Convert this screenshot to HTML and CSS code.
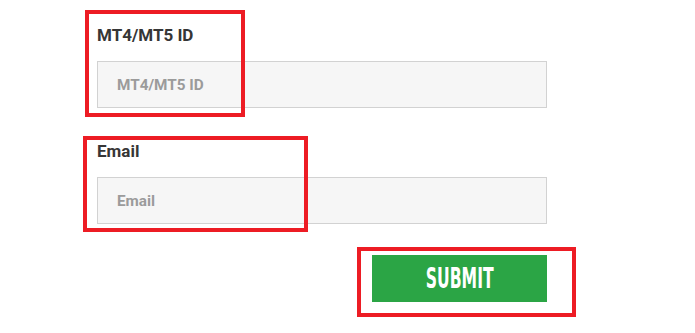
FILE: index.html
```html
<!DOCTYPE html>
<html>
<head>
<meta charset="utf-8">
<link rel="stylesheet" href="styles.css">
</head>
<body>
<div class="page">
  <form class="form">
    <label class="label">MT4/MT5 ID</label>
    <input class="field" type="text" placeholder="MT4/MT5 ID">
    <label class="label label-second">Email</label>
    <input class="field" type="text" placeholder="Email">
    <div class="actions">
      <button class="submit" type="button"><span class="submit-text">SUBMIT</span></button>
    </div>
  </form>
  <div class="mark mark-id"></div>
  <div class="mark mark-email"></div>
  <div class="mark mark-submit"></div>
</div>
</body>
</html>
```
FILE: styles.css
```css
html, body {
  margin: 0;
  padding: 0;
  background: #ffffff;
}
.page {
  position: relative;
  width: 695px;
  height: 333px;
  overflow: hidden;
  font-family: Roboto, "Liberation Sans", sans-serif;
}
.form {
  display: flex;
  flex-direction: column;
  width: 450px;
  padding: 25px 0 0 97px;
  margin: 0;
}
.label {
  display: block;
  font-size: 17px;
  line-height: 20px;
  font-weight: 700;
  color: #363636;
  margin-bottom: 16px;
}
.label-second {
  margin-top: 33px;
}
.field {
  box-sizing: border-box;
  width: 450px;
  height: 47px;
  margin: 0;
  padding: 0 0 0 19px;
  border: 1px solid #d2d2d2;
  background: #f6f6f6;
  font-family: Roboto, "Liberation Sans", sans-serif;
  font-size: 15.3px;
  font-weight: 700;
  color: #555;
  outline: none;
}
.field::placeholder {
  color: #9b9b9b;
  opacity: 1;
}
.actions {
  display: flex;
  justify-content: flex-end;
  margin-top: 31px;
}
.submit {
  width: 175px;
  height: 47px;
  border: none;
  margin: 0;
  padding: 0;
  background: #2ba545;
  display: flex;
  align-items: center;
  justify-content: center;
  cursor: pointer;
}
.submit-text {
  display: inline-block;
  font-family: "DejaVu Sans Condensed", "DejaVu Sans", sans-serif;
  font-weight: 700;
  font-size: 28px;
  line-height: 28px;
  color: #ffffff;
  transform: scaleX(0.62);
}
.mark {
  position: absolute;
  box-sizing: border-box;
  border: 4px solid #ed1c24;
}
.mark-id {
  left: 85px;
  top: 10px;
  width: 160px;
  height: 107px;
}
.mark-email {
  left: 83px;
  top: 136px;
  width: 225px;
  height: 96px;
}
.mark-submit {
  left: 357px;
  top: 247px;
  width: 219px;
  height: 70px;
}
```
